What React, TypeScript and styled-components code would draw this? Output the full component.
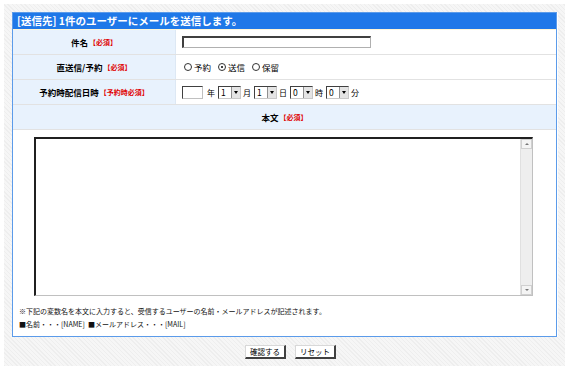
import React from "react";
import styled, { createGlobalStyle } from "styled-components";

const Global = createGlobalStyle`
  html, body { margin: 0; padding: 0; background: #ffffff; }
  body { font-family: "Noto Sans CJK JP", "Noto Sans", sans-serif; font-size: 10px; color: #000; }
`;

const Page = styled.div`
  padding: 4px;
  width: 561px;
`;

const Outer = styled.div`
  background: repeating-linear-gradient(45deg, #eeeeee 0 1px, #f6f6f6 1px 3px);
  padding: 8px;
  height: 346px;
  display: flex;
  flex-direction: column;
`;

const Panel = styled.div`
  background: #ffffff;
  border: 1px solid #5b9bea;
  box-shadow: 1px 0 0 #ffffff;
  display: flex;
  flex-direction: column;
`;

const Header = styled.div`
  background: #1f78e8;
  color: #ffffff;
  font-size: 10.5px;
  font-weight: bold;
  height: 16px;
  line-height: 16px;
  padding-left: 4px;
  border-bottom: 1px solid #fff6d8;
`;

const Row = styled.div`
  display: grid;
  grid-template-columns: 163px 1fr;
  height: 24px;
  border-bottom: 1px solid #e2e2e2;
`;

const LabelCell = styled.div`
  background: #e8f2fd;
  border-right: 1px solid #dde8f4;
  display: flex;
  align-items: center;
  justify-content: center;
  font-weight: bold;
  font-size: 8.5px;
`;

const ValueCell = styled.div<{ $gap?: number }>`
  display: flex;
  align-items: center;
  padding-left: 6px;
  gap: ${(p) => p.$gap ?? 3}px;
  font-size: 8.5px;
`;

const Req = styled.span`
  color: #e00000;
  font-size: 7px;
  font-weight: bold;
  margin-left: 1px;
`;

const FullRow = styled.div`
  background: #e8f2fd;
  height: 24px;
  border-bottom: 1px solid #e2e2e2;
  display: flex;
  align-items: center;
  justify-content: center;
  font-weight: bold;
  font-size: 8.5px;
`;

const TextInput = styled.div<{ $w: number }>`
  width: ${(p) => p.$w}px;
  height: 9px;
  border-top: 2px solid #404040;
  border-left: 2px solid #404040;
  border-right: 1px solid #b0b0b0;
  border-bottom: 1px solid #b0b0b0;
  background: #fff;
`;

const SmallInput = styled.div`
  width: 19px;
  height: 11px;
  border-top: 1px solid #404040;
  border-left: 1px solid #404040;
  border-right: 1px solid #c0c0c0;
  border-bottom: 1px solid #c0c0c0;
  background: #fff;
  margin-right: 2px;
`;

const Radios = styled.div`
  display: flex;
  gap: 7px;
  padding-left: 2px;
`;

const RadioItem = styled.label`
  display: flex;
  align-items: center;
  gap: 2px;
  font-size: 8.5px;
`;

const RadioDot = styled.span<{ $on?: boolean }>`
  width: 6px;
  height: 6px;
  border: 1px solid #333;
  border-radius: 50%;
  position: relative;
  &::after {
    content: "";
    display: ${(p) => (p.$on ? "block" : "none")};
    position: absolute;
    left: 2px;
    top: 2px;
    width: 2px;
    height: 2px;
    background: #000;
    border-radius: 50%;
  }
`;

const SelectBox = styled.div`
  display: flex;
  width: 21px;
  height: 11px;
  border-top: 1px solid #404040;
  border-left: 1px solid #404040;
  border-right: 1px solid #c8c8c8;
  border-bottom: 1px solid #c8c8c8;
  background: #fff;
  font-size: 8.5px;
  line-height: 11px;
  margin-left: 1px;
`;

const SelectVal = styled.span`
  flex: 1;
  padding-left: 2px;
`;

const SelectBtn = styled.span`
  width: 8px;
  background: #e4e4e4;
  border-left: 1px solid #909090;
  display: flex;
  align-items: center;
  justify-content: center;
  &::after {
    content: "";
    border-left: 2.5px solid transparent;
    border-right: 2.5px solid transparent;
    border-top: 3px solid #000;
  }
`;

const Unit = styled.span`
  font-size: 8px;
`;

const BodyArea = styled.div`
  padding: 7px 23px 0 21px;
`;

const TextArea = styled.div`
  height: 156px;
  border-top: 2px solid #202020;
  border-left: 2px solid #202020;
  border-right: 1px solid #c0c0c0;
  border-bottom: 1px solid #c0c0c0;
  display: flex;
  justify-content: flex-end;
`;

const Scrollbar = styled.div`
  width: 11px;
  background: #eeeeee;
  border-left: 1px solid #e0e0e0;
  display: flex;
  flex-direction: column;
  justify-content: space-between;
`;

const ScrollBtn = styled.div<{ $up?: boolean }>`
  height: 10px;
  background: #f4f4f4;
  border: 1px solid #d0d0d0;
  box-sizing: border-box;
  display: flex;
  align-items: center;
  justify-content: center;
  &::after {
    content: "";
    border-left: 2px solid transparent;
    border-right: 2px solid transparent;
    ${(p) => (p.$up ? "border-bottom: 2px solid #777;" : "border-top: 2px solid #777;")}
  }
`;

const Notes = styled.div`
  padding: 9px 6px 5px 6px;
  font-size: 7px;
  line-height: 13px;
  color: #111;
`;

const Buttons = styled.div`
  display: flex;
  justify-content: center;
  gap: 9px;
  margin-top: 8px;
  padding-left: 12px;
`;

const Button = styled.button`
  font-family: "Noto Sans CJK JP", sans-serif;
  font-size: 7.5px;
  height: 14px;
  padding: 0 4px;
  white-space: nowrap;
  background: #fff;
  border-top: 1px solid #d8d8d8;
  border-left: 1px solid #d8d8d8;
  border-right: 2px solid #404040;
  border-bottom: 2px solid #404040;
  line-height: 10px;
  color: #000;
`;

function Select({ v }: { v: string }) {
  return (
    <SelectBox>
      <SelectVal>{v}</SelectVal>
      <SelectBtn />
    </SelectBox>
  );
}

export default function App() {
  return (
    <Page>
      <Global />
      <Outer>
        <Panel>
          <Header>[送信先] 1件のユーザーにメールを送信します。</Header>
          <Row>
            <LabelCell>
              件名<Req>【必須】</Req>
            </LabelCell>
            <ValueCell>
              <TextInput $w={186} />
            </ValueCell>
          </Row>
          <Row>
            <LabelCell>
              直送信/予約<Req>【必須】</Req>
            </LabelCell>
            <ValueCell>
              <Radios>
                <RadioItem>
                  <RadioDot />
                  予約
                </RadioItem>
                <RadioItem>
                  <RadioDot $on />
                  送信
                </RadioItem>
                <RadioItem>
                  <RadioDot />
                  保留
                </RadioItem>
              </Radios>
            </ValueCell>
          </Row>
          <Row>
            <LabelCell>
              予約時配信日時<Req>【予約時必須】</Req>
            </LabelCell>
            <ValueCell $gap={2}>
              <SmallInput />
              <Unit>年</Unit>
              <Select v="1" />
              <Unit>月</Unit>
              <Select v="1" />
              <Unit>日</Unit>
              <Select v="0" />
              <Unit>時</Unit>
              <Select v="0" />
              <Unit>分</Unit>
            </ValueCell>
          </Row>
          <FullRow>
            本文<Req>【必須】</Req>
          </FullRow>
          <BodyArea>
            <TextArea>
              <Scrollbar>
                <ScrollBtn $up />
                <ScrollBtn />
              </Scrollbar>
            </TextArea>
          </BodyArea>
          <Notes>
            ※下記の変数名を本文に入力すると、受信するユーザーの名前・メールアドレスが記述されます。
            <br />
            ■名前・・・[NAME]&nbsp;&nbsp;■メールアドレス・・・[MAIL]
          </Notes>
        </Panel>
        <Buttons>
          <Button>確認する</Button>
          <Button>リセット</Button>
        </Buttons>
      </Outer>
    </Page>
  );
}
